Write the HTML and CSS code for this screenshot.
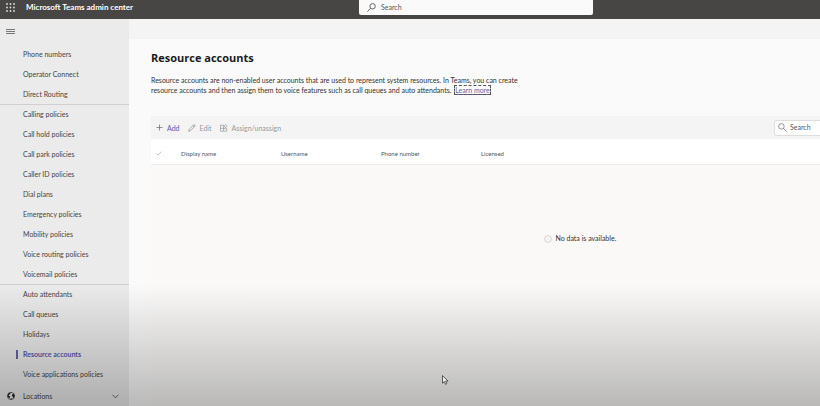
FILE: index.html
```html
<!DOCTYPE html>
<html lang="en">
<head>
<meta charset="utf-8">
<title>Resource accounts - Microsoft Teams admin center</title>
<link rel="stylesheet" href="styles.css">
</head>
<body>
<header class="topbar">
  <button class="icon-button launcher" aria-label="App launcher">
    <svg width="9" height="9" viewBox="0 0 9 9" fill="#ddd"><circle cx="1" cy="1" r=".9"/><circle cx="4.500" cy="1" r=".9"/><circle cx="8" cy="1" r=".9"/><circle cx="1" cy="4.500" r=".9"/><circle cx="4.500" cy="4.500" r=".9"/><circle cx="8" cy="4.500" r=".9"/><circle cx="1" cy="8" r=".9"/><circle cx="4.500" cy="8" r=".9"/><circle cx="8" cy="8" r=".9"/></svg>
  </button>
  <span class="brand">Microsoft Teams admin center</span>
  <label class="global-search">
    <svg width="9" height="9" viewBox="0 0 9 9" fill="none" stroke="#555" stroke-width=".9"><circle cx="5.600" cy="3.300" r="2.700"/><path d="M3.700 5.200.4 8.600"/></svg>
    <input type="text" placeholder="Search" aria-label="Search">
  </label>
</header>
<div class="shell">
  <nav class="sidebar">
    <button class="icon-button menu-button" aria-label="Collapse navigation">
      <svg width="9" height="6" viewBox="0 0 9 6" stroke="#777" stroke-width="1"><path d="M0 .5h9M0 2.500h9M0 4.500h9"/></svg>
    </button>
    <ul class="nav-group">
      <li><a href="#">Phone numbers</a></li>
      <li><a href="#">Operator Connect</a></li>
      <li><a href="#">Direct Routing</a></li>
    </ul>
    <ul class="nav-group">
      <li><a href="#">Calling policies</a></li>
      <li><a href="#">Call hold policies</a></li>
      <li><a href="#">Call park policies</a></li>
      <li><a href="#">Caller ID policies</a></li>
      <li><a href="#">Dial plans</a></li>
      <li><a href="#">Emergency policies</a></li>
      <li><a href="#">Mobility policies</a></li>
      <li><a href="#">Voice routing policies</a></li>
      <li><a href="#">Voicemail policies</a></li>
    </ul>
    <ul class="nav-group">
      <li><a href="#">Auto attendants</a></li>
      <li><a href="#">Call queues</a></li>
      <li><a href="#">Holidays</a></li>
      <li><a href="#" class="current" aria-current="page">Resource accounts</a></li>
      <li><a href="#">Voice applications policies</a></li>
    </ul>
    <button class="section-toggle">
      <svg width="8" height="8" viewBox="0 0 8 8"><circle cx="4" cy="4" r="3.600" fill="#f0f0f0" stroke="#222" stroke-width=".6"/><path d="M.9 2.100 2.400.7l1.500-.2-.3 1-1.100.5.200.6-.9.300-.3.700 1 .5.600.8-.6 1.300-.8-.4L.5 4.500zM5.400 2.200l1.200-.5.900 1.800-.5 2-.9.5-.4-1.600-.9-.6zM3.200 6.800l1.200-.5 1 .7-1.200.6z" fill="#222"/></svg>
      <span>Locations</span>
      <svg width="7" height="5" viewBox="0 0 7 5" fill="none" stroke="#444" stroke-width=".8"><path d="M.5.8l3 3 3-3"/></svg>
    </button>
  </nav>
  <main class="main">
    <div class="breadcrumb-bar"></div>
    <section class="content">
      <h1>Resource accounts</h1>
      <p class="intro">Resource accounts are non-enabled user accounts that are used to represent system resources. In Teams, you can create resource accounts and then assign them to voice features such as call queues and auto attendants. <a href="#" class="learn-more">Learn more</a></p>
      <div class="toolbar">
        <button class="command add">
          <svg width="7" height="7" viewBox="0 0 7 7" stroke="#666" stroke-width=".7"><path d="M3.500.5v6M.5 3.500h6"/></svg>
          Add
        </button>
        <button class="command" disabled>
          <svg width="8" height="8" viewBox="0 0 8 8" fill="none" stroke="#888" stroke-width=".7"><path d="M.7 7.300l.5-2L5.600.9q.7-.5 1.200 0t.1 1.300L2.500 6.700zM4.900 1.600l1.400 1.400"/></svg>
          Edit
        </button>
        <button class="command" disabled>
          <svg width="8" height="8" viewBox="0 0 8 8" fill="none" stroke="#888" stroke-width=".6"><path d="M3.600 1.200H.5v6h6.200V4.300H.5M3.600 1.200v6M5.600.5l1.600 1.600-1.600 1.600L4 2.100z"/></svg>
          Assign/unassign
        </button>
        <label class="table-search">
          <svg width="9" height="9" viewBox="0 0 9 9" fill="none" stroke="#777" stroke-width=".8"><circle cx="3.400" cy="3.400" r="2.800"/><path d="M5.400 5.400l3.200 3.200"/></svg>
          <input type="text" placeholder="Search" aria-label="Search resource accounts">
        </label>
      </div>
      <table class="accounts">
        <thead>
          <tr>
            <th class="check"><svg width="6" height="5" viewBox="0 0 6 5" fill="none" stroke="#999" stroke-width=".6" role="img" aria-label="Select all"><path d="M.4 2.500l1.500 1.600L5.500.6"/></svg></th>
            <th class="col">Display name</th>
            <th class="col">Username</th>
            <th class="col">Phone number</th>
            <th>Licensed</th>
          </tr>
        </thead>
        <tbody>
          <tr>
            <td colspan="5" class="empty">
              <svg width="8" height="8" viewBox="0 0 8 8" fill="none" stroke="#c4c4c4" stroke-width=".7"><circle cx="4" cy="4" r="3.400"/><path d="M4 3.500v2M4 2.200v.6" stroke="#ddd"/></svg>
              No data is available.
            </td>
          </tr>
        </tbody>
      </table>
    </section>
  </main>
</div>
<div class="shade"></div>
<svg class="pointer" width="7" height="10" viewBox="0 0 7 10"><path d="M.5.6v7.600l1.800-1.600 1.200 2.700 1.300-.6-1.200-2.600h2.500z" fill="#eee" stroke="#222" stroke-width=".7"/></svg>
</body>
</html>
```
FILE: styles.css
```css
* {
  box-sizing: border-box;
}

body {
  display: flex;
  flex-direction: column;
  min-height: 100vh;
  margin: 0;
  overflow: hidden;
  background: #fafafa;
  color: #333;
  font: 7px/10px Lato, "Open Sans", sans-serif;
}

button,
input {
  padding: 0;
  border: 0;
  background: none;
  color: inherit;
  font: inherit;
}

input {
  flex: 1;
  min-width: 0;
  outline: 0;
}

input::placeholder {
  color: #555;
  opacity: 1;
}

svg {
  flex: none;
}

.icon-button {
  display: flex;
}

.topbar {
  display: flex;
  align-items: flex-start;
  height: 19px;
  padding-left: 6px;
  background: #484644;
}

.launcher {
  margin: 3px 11px 0 0;
}

.brand {
  flex: 1;
  padding-top: 1px;
  color: #fff;
  font-size: 8px;
  font-weight: 700;
  line-height: 12px;
}

.global-search {
  display: flex;
  align-items: center;
  gap: 5px;
  width: 234px;
  height: 15px;
  margin-right: 227px;
  padding: 0 0 1px 8px;
  border-radius: 0 0 2px 2px;
  background: #fafafa;
}

.shell {
  display: flex;
  flex: 1;
}

.sidebar {
  flex: none;
  width: 129px;
  background: #ebebeb;
}

.menu-button {
  margin: 10px 0 10px 6px;
}

.nav-group {
  margin: 0;
  padding: 0;
  list-style: none;
}

.nav-group + .nav-group {
  margin-top: -1px;
  border-top: 1px solid #cfcfcf;
}

.nav-group a {
  display: block;
  height: 20px;
  padding-left: 23px;
  color: #444;
  line-height: 18px;
  text-decoration: none;
}

.nav-group .current {
  background: linear-gradient(#6264a7, #6264a7) 16px 5px / 2px 9px no-repeat;
  color: #5558af;
  font-weight: 700;
}

.section-toggle {
  display: flex;
  align-items: center;
  gap: 8px;
  width: 100%;
  height: 22px;
  padding: 0 10px 0 7px;
  color: #444;
  text-align: left;
}

.section-toggle span {
  flex: 1;
}

.main {
  flex: 1;
  min-width: 0;
  overflow: hidden;
}

.breadcrumb-bar {
  height: 20px;
  background: #f4f4f4;
}

.content {
  min-width: 880px;
  padding: 11px 0 0 22px;
}

h1 {
  margin: 0;
  color: #1b1b1b;
  font-family: "Open Sans", sans-serif;
  font-size: 11px;
  font-weight: 700;
  line-height: 16px;
}

.intro {
  max-width: 376px;
  margin: 9px 0 21px;
}

.learn-more {
  margin-left: 2px;
  outline: 1px dashed #555;
  color: #6264a7;
}

.toolbar {
  display: flex;
  align-items: center;
  height: 23px;
  padding-left: 5px;
  background: #f4f4f4;
}

.command {
  display: flex;
  align-items: center;
  gap: 4px;
  margin-right: 8px;
  color: #999;
}

.add {
  color: #5558af;
}

.table-search {
  display: flex;
  align-items: center;
  gap: 3px;
  width: 235px;
  height: 16px;
  margin-left: auto;
  padding: 0 0 1px 3px;
  border: 1px solid #ddd;
  border-radius: 2px;
  background: #fff;
}

.accounts {
  width: 100%;
  border-collapse: collapse;
  background: #faf9f8;
  table-layout: fixed;
}

.accounts thead tr {
  height: 25px;
  border-bottom: 1px solid #eee;
  background: #fff;
}

.accounts th {
  padding: 6px 0 0;
  color: #555;
  font-size: 6px;
  font-weight: 400;
  text-align: left;
}

.accounts .check {
  width: 30px;
  padding-left: 5px;
}

.accounts .col {
  width: 100px;
}

.accounts .empty {
  height: 242px;
  padding: 68px 0 0;
  text-align: center;
  vertical-align: top;
}

.empty svg {
  margin-right: 2px;
  vertical-align: middle;
}

.shade {
  position: absolute;
  right: 0;
  bottom: 0;
  left: 0;
  height: 30%;
  background: linear-gradient(rgba(0, 0, 0, 0), rgba(0, 0, 0, .26));
  pointer-events: none;
}

.pointer {
  position: absolute;
  top: 375px;
  left: 442px;
}
```
